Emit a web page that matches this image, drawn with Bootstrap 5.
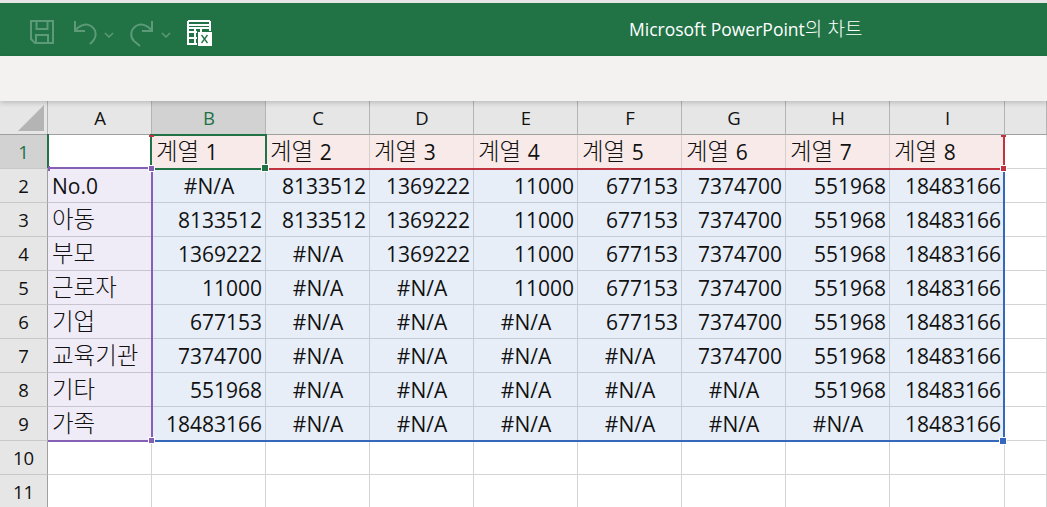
<!DOCTYPE html>
<html lang="ko">

<head>
    <meta charset="UTF-8">
    <title>Microsoft PowerPoint의 차트</title>
    <link href="https://cdn.jsdelivr.net/npm/bootstrap@5.3.0/dist/css/bootstrap.min.css" rel="stylesheet">
    <style>
        body {
            background: #fff;
            font-family: "Open Sans", "Noto Sans CJK KR", sans-serif;
            overflow: hidden;
            height: 507px;
        }

        .top-edge {
            height: 3px;
            background: #e6e6e6;
        }

        .title-bar {
            height: 53px;
            background: #217346;
            color: #fff;
            padding-left: 29px;
        }

        .title-text {
            position: absolute;
            left: 629px;
            top: 13px;
            font-size: 17.5px;
            line-height: 26px;
            white-space: nowrap;
        }

        .title-text .ko {
            font-size: 19px;
            line-height: 1;
            font-weight: 300;
            font-family: "Noto Sans CJK KR", sans-serif;
        }

        .ribbon {
            height: 45px;
            background: #f3f2f1;
            box-shadow: 0 2px 5px rgba(0, 0, 0, .18);
            position: relative;
            z-index: 3;
        }

        .sheet-wrap {
            position: relative;
        }

        .sheet {
            table-layout: fixed;
            border-collapse: separate;
            border-spacing: 0;
            width: 1047px;
            margin: 0;
        }

        .sheet th,
        .sheet td {
            height: 34px;
            padding: 0 3px 0 4px;
            font-size: 21px;
            line-height: 28px;
            font-weight: 400;
            color: #111;
            border-right: 1px solid #d4d4d4;
            border-bottom: 1px solid #d4d4d4;
            white-space: nowrap;
        }

        .sheet td .ko {
            font-family: "Noto Sans CJK KR", sans-serif;
            font-size: 23.500px;
            line-height: 1;
            font-weight: 300;
        }

        .sheet thead th {
            background: #e6e6e6;
            color: #111;
            text-align: center;
            font-size: 18.500px;
            height: 34px;
            border-right: 1px solid #b4b4b4;
            border-bottom: 1px solid #a0a0a0;
        }

        .sheet thead th.col-active {
            background: #d2d2d2;
            color: #217346;
        }

        .sheet thead th.corner {
            position: relative;
        }

        .corner-mark {
            position: absolute;
            right: 3px;
            bottom: 3px;
            width: 0;
            height: 0;
            border-left: 26px solid transparent;
            border-bottom: 26px solid #b4b4b4;
        }

        .sheet tbody th {
            background: #e6e6e6;
            color: #111;
            text-align: center;
            font-size: 18.500px;
            padding: 0;
            border-right: 1px solid #a0a0a0;
            border-bottom: 1px solid #c8c8c8;
        }

        .sheet tbody th.row-active {
            background: #d2d2d2;
            color: #217346;
        }

        .sheet td.num {
            text-align: right;
        }

        .sheet td.na {
            text-align: center;
        }

        .sheet td.ser {
            background: #f9eaea;
            border-right-color: #d9cdcd;
            border-bottom-color: #d9cdcd;
        }

        .sheet td.cat {
            background: #f0ecf7;
            border-right-color: #c8c5d0;
            border-bottom-color: #c8c5d0;
        }

        .sheet td.val {
            background: #e7eef8;
            border-right-color: #c6ccd5;
            border-bottom-color: #c6ccd5;
        }

        /* marcas de rango sobre la hoja: x, y relativos a la hoja */
        .rng {
            position: absolute;
            z-index: 2;
        }

        .rng-h {
            position: absolute;
            z-index: 4;
            width: 6px;
            height: 6px;
            outline: 1px solid #fff;
        }

        .c-green { background: #217346; }
        .c-red { background: #c0333f; }
        .c-purple { background: #8560b5; }
        .c-blue { background: #3568bd; }
    </style>
</head>

<body>
    <div class="top-edge"></div>
    <!-- Barra de título -->
    <div class="title-bar position-relative">
        <svg class="d-block" width="190" height="53" viewBox="0 0 190 53" fill="none" stroke="#5c9a78" stroke-width="2">
            <!-- guardar -->
            <path d="M2 18h22v22H6l-4-4z" />
            <path d="M7.500 18v8h11v-8M7 40v-8h12v8" />
            <!-- deshacer -->
            <path d="M46 18v10h10M46 28c4-6 11-8 16-5 6 4 6 11 1 16l-2 2" />
            <path d="M76 30l4 4 4-4M133 30l4 4 4-4" stroke-width="1.500" />
            <!-- rehacer -->
            <path d="M123 18v10h-10M123 28c-4-6-11-8-16-5-6 4-6 11-2 15l6 5" />
            <!-- hoja con X -->
            <path d="M159 18h22M159 22h22M159 25h22M159 18v23h9M159 29h9M159 35h9M166 25v16M172 25v4M181 18v10" stroke="#fff" />
            <rect x="169" y="29" width="14" height="14" fill="#fff" stroke="none" />
            <path d="M172.500 32l6 8M178.500 32l-6 8" stroke="#217346" stroke-width="1.300" />
        </svg>
        <span class="title-text">Microsoft PowerPoint<span class="ko">의 차트</span></span>
    </div>
    <div class="ribbon"></div>

    <div class="sheet-wrap">
        <table class="sheet" id="hoja"></table>

        <!-- celda activa B1 -->
        <div class="rng c-green" style="left:47px;top:33px;width:2px;height:34px"></div>
        <div class="rng c-green" style="left:150px;top:33px;width:2px;height:36px"></div>
        <div class="rng c-green" style="left:265px;top:33px;width:2px;height:36px"></div>
        <div class="rng c-green" style="left:150px;top:33px;width:117px;height:2px"></div>
        <div class="rng c-green" style="left:150px;top:67px;width:117px;height:2px"></div>
        <div class="rng-h c-green" style="left:262px;top:64px"></div>

        <!-- títulos de serie -->
        <div class="rng c-red" style="left:268px;top:67px;width:737px;height:2px"></div>
        <div class="rng c-red" style="left:1003px;top:36px;width:2px;height:33px"></div>
        <div class="rng c-red" style="left:149px;top:34px;width:5px;height:2px"></div>
        <div class="rng c-red" style="left:1001px;top:34px;width:5px;height:2px"></div>
        <div class="rng-h c-red" style="left:1001px;top:65px;width:5px;height:5px"></div>

        <!-- categorías -->
        <div class="rng c-purple" style="left:50px;top:66px;width:100px;height:2px"></div>
        <div class="rng c-purple" style="left:151px;top:69px;width:2px;height:271px"></div>
        <div class="rng c-purple" style="left:48px;top:339px;width:105px;height:2px"></div>
        <div class="rng c-purple" style="left:48px;top:65px;width:2px;height:5px"></div>
        <div class="rng-h c-purple" style="left:149px;top:65px;width:5px;height:5px"></div>
        <div class="rng-h c-purple" style="left:149px;top:337px;width:5px;height:5px"></div>

        <!-- valores -->
        <div class="rng c-blue" style="left:155px;top:339px;width:850px;height:2px"></div>
        <div class="rng c-blue" style="left:1003px;top:70px;width:2px;height:271px"></div>
        <div class="rng-h c-blue" style="left:1000px;top:337px"></div>
    </div>

    <script src="https://cdn.jsdelivr.net/npm/bootstrap@5.3.0/dist/js/bootstrap.bundle.min.js"></script>
    <script>
        const columnas = ["A", "B", "C", "D", "E", "F", "G", "H", "I"];
        const anchos = [104, 114, 104, 104, 104, 104, 104, 104, 115];
        const categorias = ["No.0", "<span class='ko'>아동</span>", "<span class='ko'>부모</span>", "<span class='ko'>근로자</span>",
            "<span class='ko'>기업</span>", "<span class='ko'>교육기관</span>", "<span class='ko'>기타</span>", "<span class='ko'>가족</span>"];
        const valores = [null, 8133512, 1369222, 11000, 677153, 7374700, 551968, 18483166];

        let html = '<colgroup><col style="width:48px">';
        anchos.forEach(a => html += `<col style="width:${a}px">`);
        html += "<col></colgroup><thead><tr><th class='corner'><span class='corner-mark'></span></th>";
        columnas.forEach((c, i) => html += `<th class="${i === 1 ? "col-active" : ""}">${c}</th>`);
        html += "<th></th></tr></thead><tbody>";

        // fila 1: títulos de serie
        html += "<tr><th class='row-active'>1</th><td></td>";
        for (let s = 1; s <= 8; s++) html += `<td class="ser"><span class="ko">계열 </span>${s}</td>`;
        html += "<td></td></tr>";

        categorias.forEach((nombre, f) => {
            html += `<tr><th>${f + 2}</th><td class="cat">${nombre}</td>`;
            for (let s = 0; s < 8; s++) {
                let v;
                if (s === 0) v = f === 0 ? null : valores[f];
                else if (f === 0) v = valores[s];
                else v = s >= f ? valores[s] : null;
                html += v === null
                    ? '<td class="val na">#N/A</td>'
                    : `<td class="val num">${v}</td>`;
            }
            html += "<td></td></tr>";
        });
        html += "<tr><th>10</th>" + "<td></td>".repeat(10) + "</tr>";
        html += "<tr><th>11</th>" + "<td></td>".repeat(10) + "</tr></tbody>";
        document.getElementById("hoja").innerHTML = html;
    </script>
</body>

</html>
